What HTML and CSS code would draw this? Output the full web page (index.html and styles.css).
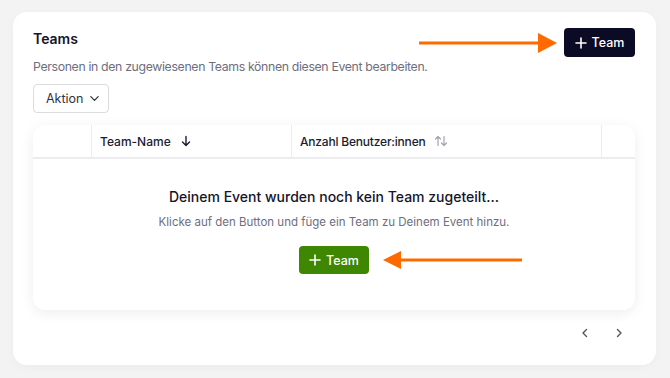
FILE: index.html
```html
<!DOCTYPE html>
<html lang="de">
<head>
    <meta charset="UTF-8">
    <meta name="viewport" content="width=device-width, initial-scale=1.0">
    <title>Teams</title>
    <link rel="stylesheet" href="styles.css">
</head>
<body>
    <div class="card">
        <div class="card-head">
            <h2>Teams</h2>
            <button class="btn btn-dark">
                <svg viewBox="0 0 12 12" width="12" height="12"><path d="M6 1v10M1 6h10" stroke="#fff" stroke-width="1.6" stroke-linecap="round"/></svg>
                Team
            </button>
        </div>
        <p class="subtitle">Personen in den zugewiesenen Teams können diesen Event bearbeiten.</p>
        <button class="btn-outline">
            Aktion
            <svg viewBox="0 0 12 12" width="11" height="11"><path d="M2 4l4 4 4-4" fill="none" stroke="#333" stroke-width="1.4" stroke-linecap="round" stroke-linejoin="round"/></svg>
        </button>

        <div class="table-card">
            <div class="table-head">
                <div class="cell cell-check"></div>
                <div class="cell cell-name">Team-Name
                    <svg viewBox="0 0 12 12" width="12" height="12"><path d="M6 1.5v9M2.5 7l3.5 3.5L9.5 7" fill="none" stroke="#1c1c30" stroke-width="1.4" stroke-linecap="round" stroke-linejoin="round"/></svg>
                </div>
                <div class="cell cell-count">Anzahl Benutzer:innen
                    <svg viewBox="0 0 14 12" width="14" height="12"><path d="M4 10.5V1.5M1.5 4L4 1.5 6.5 4M10 1.5v9M7.5 8l2.5 2.5L12.5 8" fill="none" stroke="#a3a3b0" stroke-width="1.2" stroke-linecap="round" stroke-linejoin="round"/></svg>
                </div>
                <div class="cell cell-end"></div>
            </div>
            <div class="empty">
                <h3>Deinem Event wurden noch kein Team zugeteilt...</h3>
                <p>Klicke auf den Button und füge ein Team zu Deinem Event hinzu.</p>
                <button class="btn btn-green">
                    <svg viewBox="0 0 12 12" width="12" height="12"><path d="M6 1v10M1 6h10" stroke="#fff" stroke-width="1.6" stroke-linecap="round"/></svg>
                    Team
                </button>
            </div>
        </div>

        <div class="pager">
            <svg viewBox="0 0 12 12" width="12" height="12"><path d="M7.5 2.5L4 6l3.5 3.5" fill="none" stroke="#555" stroke-width="1.4" stroke-linecap="round" stroke-linejoin="round"/></svg>
            <svg viewBox="0 0 12 12" width="12" height="12"><path d="M4.5 2.5L8 6 4.5 9.5" fill="none" stroke="#555" stroke-width="1.4" stroke-linecap="round" stroke-linejoin="round"/></svg>
        </div>

        <svg class="arrow arrow-top" viewBox="0 0 138 20" width="138" height="20"><path d="M0 10h122" stroke="#ff6a00" stroke-width="3"/><path d="M119 0L138 10 119 20z" fill="#ff6a00"/></svg>
        <svg class="arrow arrow-bottom" viewBox="0 0 139 18" width="139" height="18"><path d="M16 9h123" stroke="#ff6a00" stroke-width="3"/><path d="M0 9L18 0v18z" fill="#ff6a00"/></svg>
    </div>
</body>
</html>
```

FILE: styles.css
```css
body {
    margin: 0;
    padding: 12px 14px 13px 13px;
    background: #f3f3f4;
    font-family: Inter, "Noto Sans", sans-serif;
    color: #1c1c30;
}
svg {
    flex-shrink: 0;
}
.card {
    position: relative;
    background: #fff;
    border-radius: 14px;
    padding: 16px 21px 0 20px;
    height: 353px;
    box-sizing: border-box;
    box-shadow: 0 2px 10px rgba(0, 0, 0, 0.03);
}
.card-head {
    display: flex;
    justify-content: space-between;
    align-items: flex-start;
}
h2 {
    margin: 1px 0 0;
    font-size: 14px;
    line-height: 20px;
    font-weight: 600;
    color: #14142b;
}
.btn {
    display: inline-flex;
    align-items: center;
    justify-content: center;
    gap: 5px;
    height: 29px;
    padding: 0;
    border: none;
    border-radius: 4px;
    color: #fff;
    font-family: Inter, sans-serif;
    font-size: 12.5px;
    font-weight: 500;
}
.btn-dark {
    background: #0b0b26;
    width: 71px;
}
.btn-green {
    background: #3f8700;
    width: 70px;
    height: 28px;
    margin-top: 17px;
}
.subtitle {
    margin: 2px 0 9px;
    font-size: 12.3px;
    letter-spacing: -0.35px;
    color: #6e6e80;
    line-height: 16px;
}
.btn-outline {
    display: inline-flex;
    align-items: center;
    gap: 6px;
    height: 29px;
    width: 76px;
    padding: 0 12px;
    border: 1px solid #dcdce0;
    border-radius: 4px;
    background: #fff;
    font-family: Inter, sans-serif;
    font-size: 12.5px;
    color: #333340;
    vertical-align: top;
}
.table-card {
    margin-top: 12px;
    border-radius: 12px;
    background: #fff;
    box-shadow: 0 3px 14px rgba(0, 0, 0, 0.07);
    height: 185px;
    overflow: hidden;
}
.table-head {
    display: flex;
    height: 34px;
    border-bottom: 2px solid #ececef;
    box-sizing: border-box;
}
.cell {
    display: flex;
    align-items: center;
    gap: 8px;
    font-size: 12px;
    font-weight: 500;
    color: #1c1c30;
    padding-left: 8px;
    border-right: 1px solid #ececef;
}
.cell-check { width: 58px; padding: 0; }
.cell-name { width: 200px; box-sizing: border-box; gap: 9px; }
.cell-count { flex: 1; letter-spacing: -0.2px; }
.cell-end { width: 33px; border-right: none; padding: 0; }
.empty {
    text-align: center;
    padding-top: 28px;
}
.empty h3 {
    margin: 0;
    font-size: 14px;
    font-weight: 500;
    color: #14142b;
    line-height: 20px;
}
.empty p {
    margin: 8px 0 0;
    font-size: 11.5px;
    color: #6e6e80;
}
.pager {
    display: flex;
    justify-content: flex-end;
    gap: 22px;
    padding: 17px 10px 0 0;
}
.arrow {
    position: absolute;
}
.arrow-top {
    left: 406px;
    top: 21px;
}
.arrow-bottom {
    left: 370px;
    top: 239px;
}
```
